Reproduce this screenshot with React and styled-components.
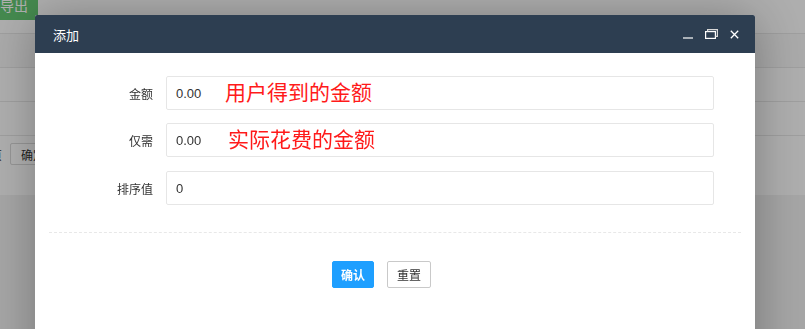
import React from "react";
import styled, { createGlobalStyle } from "styled-components";

const GlobalStyle = createGlobalStyle`
  html, body {
    margin: 0;
    padding: 0;
    overflow: hidden;
  }
  body {
    font-family: "Liberation Sans", "Noto Sans CJK SC", sans-serif;
    font-size: 12px;
    color: #333;
    background: #f0f0f0;
  }
`;

const Page = styled.div`
  min-height: 100vh;
  background: #f0f0f0;
`;

const Toolbar = styled.div`
  height: 34px;
  background: #fdfdfd;
  border-bottom: 1px solid #e6e6e6;
  box-sizing: border-box;
`;

const ExportButton = styled.button`
  margin: -11px 0 0 -12px;
  height: 30px;
  padding: 0 10px 0 12px;
  border: 0;
  border-radius: 0 0 3px 0;
  background: #64c873;
  color: #fff;
  font-family: inherit;
  font-size: 14px;
`;

const TableRow = styled.div`
  height: 34px;
  box-sizing: border-box;
  background: ${(p) => (p.$head ? "#f6f6f6" : "#fdfdfd")};
  border-bottom: 1px solid #e6e6e6;
`;

const Pager = styled.div`
  height: 59px;
  background: #fdfdfd;
  display: flex;
  align-items: flex-start;
  padding-top: 6px;
  box-sizing: border-box;
  gap: 8px;
`;

const PagerText = styled.span`
  margin-left: -10px;
  line-height: 28px;
  font-size: 12px;
  color: #333;
`;

const PagerButton = styled.button`
  height: 22px;
  margin-top: 1px;
  padding: 0 10px;
  border: 1px solid #d9d9d9;
  border-radius: 2px;
  background: #fff;
  font-family: inherit;
  font-size: 12px;
  color: #333;
`;

const Shade = styled.div`
  position: fixed;
  inset: 0;
  background: rgba(0, 0, 0, 0.31);
`;

const Modal = styled.div`
  position: fixed;
  left: 35px;
  top: 15px;
  width: 720px;
  height: 400px;
  background: #fff;
  box-shadow: 1px 1px 50px rgba(0, 0, 0, 0.3);
  border-radius: 2px 2px 0 0;
`;

const Header = styled.div`
  height: 38px;
  background: #2d3e51;
  display: flex;
  align-items: center;
  padding: 0 16px 0 18px;
  border-radius: 2px 2px 0 0;
`;

const Title = styled.div`
  flex: 1;
  color: #fff;
  font-size: 13px;
`;

const HeaderTools = styled.div`
  display: flex;
  align-items: center;
  gap: 12px;
  color: #fff;
`;

const Body = styled.div`
  padding: 23px 14px 0;
`;

const Row = styled.div`
  display: flex;
  align-items: center;
  margin-bottom: ${(p) => p.$gap}px;
`;

const Label = styled.label`
  width: 104px;
  text-align: right;
  font-size: 12px;
  color: #333;
  margin-right: 13px;
`;

const InputWrap = styled.div`
  position: relative;
  width: 548px;
`;

const Input = styled.input`
  display: block;
  width: 100%;
  height: 34px;
  box-sizing: border-box;
  border: 1px solid #e6e6e6;
  border-radius: 2px;
  padding: 0 9px;
  font-family: inherit;
  font-size: 13px;
  color: #333;
  outline: none;
`;

const Note = styled.span`
  position: absolute;
  left: ${(p) => p.$left}px;
  top: 2px;
  font-size: 21px;
  line-height: 30px;
  color: #ff1a1a;
  pointer-events: none;
`;

const Divider = styled.div`
  margin-top: 27px;
  border-top: 1px dashed #e8e8e8;
`;

const Actions = styled.div`
  display: flex;
  gap: 13px;
  padding: 28px 0 0 283px;
`;

const Button = styled.button`
  height: 27px;
  padding: 0 ${(p) => (p.$primary ? 8 : 9)}px;
  box-sizing: border-box;
  border: 1px solid ${(p) => (p.$primary ? "#1e9fff" : "#c9c9c9")};
  border-radius: 2px;
  background: ${(p) => (p.$primary ? "#1e9fff" : "#fff")};
  color: ${(p) => (p.$primary ? "#fff" : "#333")};
  font-family: inherit;
  font-size: 12px;
  font-weight: ${(p) => (p.$primary ? "bold" : "normal")};
`;

const MinIcon = () => (
  <svg width="10" height="10" viewBox="0 0 10 10">
    <line x1="0" y1="9" x2="10" y2="9" stroke="#fff" strokeWidth="1.2" />
  </svg>
);

const MaxIcon = () => (
  <svg width="13" height="10" viewBox="0 0 13 10">
    <rect x="0.6" y="2.6" width="9.8" height="6.8" fill="none" stroke="#fff" strokeWidth="1.2" />
    <path d="M2.6 2.6 V0.6 H12.4 V7.4 H10.4" fill="none" stroke="#d8d8d8" strokeWidth="1.2" />
  </svg>
);

const CloseIcon = () => (
  <svg width="9" height="9" viewBox="0 0 9 9">
    <path d="M0.8 0.8 L8.2 8.2 M8.2 0.8 L0.8 8.2" stroke="#fff" strokeWidth="1.3" />
  </svg>
);

const fields = [
  { label: "金额", value: "0.00", note: "用户得到的金额", left: 59, gap: 13 },
  { label: "仅需", value: "0.00", note: "实际花费的金额", left: 62, gap: 14 },
  { label: "排序值", value: "0", gap: 0 },
];

export default function App() {
  return (
    <>
      <GlobalStyle />
      <Page>
        <Toolbar>
          <ExportButton>导出</ExportButton>
        </Toolbar>
        <TableRow $head />
        <TableRow />
        <TableRow />
        <Pager>
          <PagerText>页</PagerText>
          <PagerButton>确定</PagerButton>
        </Pager>
      </Page>
      <Shade />
      <Modal>
        <Header>
          <Title>添加</Title>
          <HeaderTools>
            <MinIcon />
            <MaxIcon />
            <CloseIcon />
          </HeaderTools>
        </Header>
        <Body>
          {fields.map((f) => (
            <Row key={f.label} $gap={f.gap}>
              <Label>{f.label}</Label>
              <InputWrap>
                <Input defaultValue={f.value} />
                {f.note && <Note $left={f.left}>{f.note}</Note>}
              </InputWrap>
            </Row>
          ))}
          <Divider />
          <Actions>
            <Button $primary>确认</Button>
            <Button>重置</Button>
          </Actions>
        </Body>
      </Modal>
    </>
  );
}
